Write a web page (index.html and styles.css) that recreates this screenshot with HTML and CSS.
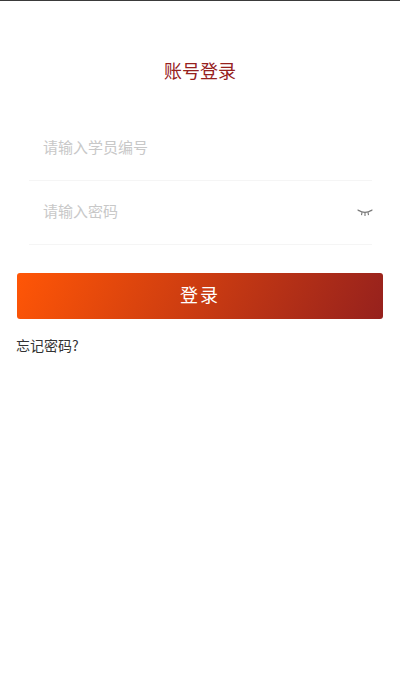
FILE: index.html
```html
<!DOCTYPE html>
<html lang="zh-CN">

<head>
    <meta charset="UTF-8" />
    <meta name="viewport" content="width=device-width,initial-scale=1.0" />
    <title>账号登录</title>
    <link rel="stylesheet" href="styles.css">
</head>

<body>
    <div class="status-line"></div>
    <h1 class="title">账号登录</h1>
    <form class="login-form">
        <div class="field">
            <input type="text" placeholder="请输入学员编号" />
        </div>
        <div class="field">
            <input type="password" placeholder="请输入密码" />
            <svg class="eye" width="16" height="9" viewBox="0 0 16 9" fill="none" stroke="#777" stroke-width="1.1">
                <path d="M2 1.5C5 4 11 4 14 1.5" />
                <path d="M2.4 2L0.6 0.8M5 3.3L4.5 6.2M8 3.6V7M11 3.3L11.5 6.2M13.6 2L15.4 0.8" />
            </svg>
        </div>
        <button type="button" class="login-btn">登录</button>
    </form>
    <a class="forgot" href="#">忘记密码?</a>
</body>

</html>
```

FILE: styles.css
```css
* {
    margin: 0;
    padding: 0;
    box-sizing: border-box;
}

body {
    width: 400px;
    height: 694px;
    overflow: hidden;
    background: #fff;
    font-family: "Noto Sans CJK SC", "Liberation Sans", sans-serif;
    color: #333;
}

.status-line {
    height: 1px;
    background: #3a3a3a;
}

.title {
    margin-top: 56px;
    font-size: 18px;
    line-height: 26px;
    font-weight: 400;
    text-align: center;
    color: #96211d;
}

.login-form {
    margin-top: 34px;
    padding: 0 17px;
}

.field {
    display: flex;
    align-items: center;
    height: 64px;
    margin: 0 11px 0 12px;
    padding: 0 0 4px 14px;
    border-bottom: 1px solid #f5f5f5;
}

.field input {
    flex: 1;
    min-width: 0;
    border: none;
    outline: none;
    background: none;
    font-family: inherit;
    font-size: 15px;
}

.field input::placeholder {
    color: #c8c8c8;
    opacity: 1;
}

.eye {
    flex-shrink: 0;
    margin: 6px -1px 0 0;
}

.login-btn {
    display: block;
    width: 100%;
    height: 46px;
    margin-top: 28px;
    border: none;
    border-radius: 3px;
    background: linear-gradient(115deg, #ff5606 0%, #96211d 100%);
    font-family: inherit;
    font-size: 18px;
    line-height: 40px;
    padding-bottom: 4px;
    letter-spacing: 2px;
    color: #fff;
}

.forgot {
    display: block;
    margin: 16px 0 0 16px;
    font-size: 14px;
    line-height: 20px;
    color: #333;
    text-decoration: none;
}
```
